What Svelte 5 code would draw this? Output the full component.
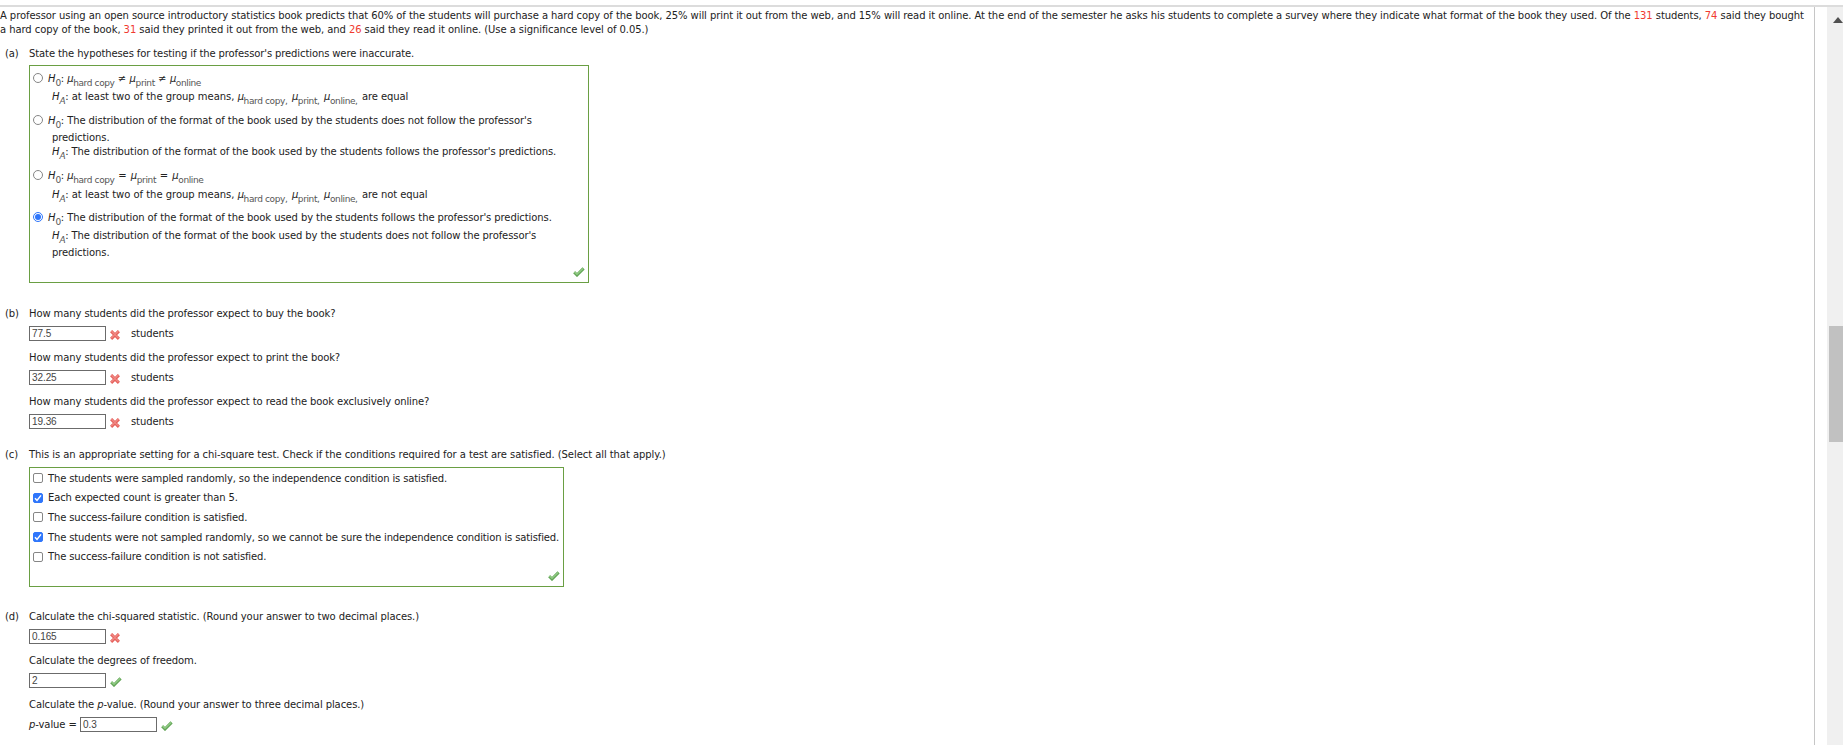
<script lang="ts">
  type Part = { text: string; kind?: 'i' | 'mu' | 'sub' | 'isub' | 'op' | 'eq' | 'sep' | 'lead' };
  type Line = { parts: Part[]; indent?: boolean; gap: number };
  type Hypothesis = { lines: Line[]; checked: boolean; gap: number };

  const h0: Part[] = [{ text: 'H', kind: 'i' }, { text: '0', kind: 'sub' }];
  const hA: Part[] = [{ text: 'H', kind: 'i' }, { text: 'A', kind: 'isub' }];
  const mu = (name: string): Part[] => [{ text: 'μ', kind: 'mu' }, { text: name, kind: 'sub' }];
  const t = (text: string): Part => ({ text });
  const ne: Part = { text: ' ≠ ', kind: 'op' };
  const eq: Part = { text: ' = ', kind: 'eq' };
  const sep: Part = { text: ' ', kind: 'sep' };

  const means = (end: string): Part[] => [
    ...hA,
    { text: ': at least two of the group means, ', kind: 'lead' },
    ...mu('hard copy,'),
    sep,
    ...mu('print,'),
    sep,
    ...mu('online,'),
    sep,
    t(end),
  ];

  const hypotheses: Hypothesis[] = [
    {
      checked: false,
      gap: 6,
      lines: [
        { parts: [...h0, t(': '), ...mu('hard copy'), ne, ...mu('print'), ne, ...mu('online')], gap: 0 },
        { parts: means('are equal'), indent: true, gap: 4 },
      ],
    },
    {
      checked: false,
      gap: 10,
      lines: [
        { parts: [...h0, t(": The distribution of the format of the book used by the students does not follow the professor's")], gap: 0 },
        { parts: [t('predictions.')], indent: true, gap: 3 },
        { parts: [...hA, t(": The distribution of the format of the book used by the students follows the professor's predictions.")], indent: true, gap: 0 },
      ],
    },
    {
      checked: false,
      gap: 10,
      lines: [
        { parts: [...h0, t(': '), ...mu('hard copy'), eq, ...mu('print'), eq, ...mu('online')], gap: 0 },
        { parts: means('are not equal'), indent: true, gap: 5 },
      ],
    },
    {
      checked: true,
      gap: 9,
      lines: [
        { parts: [...h0, t(": The distribution of the format of the book used by the students follows the professor's predictions.")], gap: 0 },
        { parts: [...hA, t(": The distribution of the format of the book used by the students does not follow the professor's")], indent: true, gap: 4 },
        { parts: [t('predictions.')], indent: true, gap: 3 },
      ],
    },
  ];

  const expected = [
    { question: 'How many students did the professor expect to buy the book?', value: '77.5' },
    { question: 'How many students did the professor expect to print the book?', value: '32.25' },
    { question: 'How many students did the professor expect to read the book exclusively online?', value: '19.36' },
  ];

  const conditions = [
    { label: 'The students were sampled randomly, so the independence condition is satisfied.', checked: false },
    { label: 'Each expected count is greater than 5.', checked: true },
    { label: 'The success-failure condition is satisfied.', checked: false },
    { label: 'The students were not sampled randomly, so we cannot be sure the independence condition is satisfied.', checked: true },
    { label: 'The success-failure condition is not satisfied.', checked: false },
  ];
</script>

{#snippet tick()}
  <svg class="mark" width="12" height="10" viewBox="0 0 12 10">
    <path d="M1.2 5.2 L4 8 L10.6 1.4" fill="none" stroke="#62a456" stroke-width="3" />
    <path d="M1.4 4.9 L4 7.3 L10.4 1.2" fill="none" stroke="#8fc983" stroke-width="1.5" />
  </svg>
{/snippet}

{#snippet cross()}
  <svg class="mark" width="10" height="10" viewBox="0 0 10 10">
    <path d="M1.1 1.1 L8.9 8.9 M8.9 1.1 L1.1 8.9" fill="none" stroke="#e6605b" stroke-width="3" />
    <path d="M1.3 1 L8.5 8.2 M8.5 1 L1.3 8.2" fill="none" stroke="#f08a85" stroke-width="1.2" />
  </svg>
{/snippet}

<div class="page">
  <main>
    <div class="intro">
      <div>A professor using an open source introductory statistics book predicts that 60% of the students will purchase a hard copy of the book, 25% will print it out from the web, and 15% will read it online. At the end of the semester he asks his students to complete a survey where they indicate what format of the book they used. Of the <em>131</em> students, <em>74</em> said they bought</div>
      <div>a hard copy of the book, <em>31</em> said they printed it out from the web, and <em>26</em> said they read it online. (Use a significance level of 0.05.)</div>
    </div>

    <section class="a">
      <span class="letter">(a)</span>
      <div class="body">
        <div class="question">State the hypotheses for testing if the professor's predictions were inaccurate.</div>
        <div class="choices hypotheses">
          {#each hypotheses as h, i (i)}
            <div class="choice" style="margin-top: {h.gap}px">
              <span class="radio" class:checked={h.checked}></span>
              <div>
                {#each h.lines as line, j (j)}
                  <div class="line" class:indent={line.indent} style="margin-top: {line.gap}px">{#each line.parts as part, k (k)}<span class={part.kind}>{part.text}</span>{/each}</div>
                {/each}
              </div>
            </div>
          {/each}
          <div class="result">{@render tick()}</div>
        </div>
      </div>
    </section>

    <section class="b">
      <span class="letter">(b)</span>
      <div class="body">
        {#each expected as item, i (i)}
          <div class="question">{item.question}</div>
          <div class="answer">
            <span class="field">{item.value}</span>
            {@render cross()}
            <span class="unit">students</span>
          </div>
        {/each}
      </div>
    </section>

    <section class="c">
      <span class="letter">(c)</span>
      <div class="body">
        <div class="question">This is an appropriate setting for a chi-square test. Check if the conditions required for a test are satisfied. (Select all that apply.)</div>
        <div class="choices conditions">
          {#each conditions as item, i (i)}
            <div class="condition">
              <span class="checkbox" class:checked={item.checked}>
                {#if item.checked}
                  <svg width="10" height="10" viewBox="0 0 10 10"><path d="M2 5.2 L4 7.4 L8 2.4" fill="none" stroke="#fff" stroke-width="1.5" /></svg>
                {/if}
              </span>
              <span>{item.label}</span>
            </div>
          {/each}
          <div class="result">{@render tick()}</div>
        </div>
      </div>
    </section>

    <section class="d">
      <span class="letter">(d)</span>
      <div class="body">
        <div class="question">Calculate the chi-squared statistic. (Round your answer to two decimal places.)</div>
        <div class="answer"><span class="field">0.165</span>{@render cross()}</div>
        <div class="question">Calculate the degrees of freedom.</div>
        <div class="answer"><span class="field">2</span>{@render tick()}</div>
        <div class="question">Calculate the <i>p</i>-value. (Round your answer to three decimal places.)</div>
        <div class="answer"><span class="prefix"><i>p</i>-value =</span><span class="field">0.3</span>{@render tick()}</div>
      </div>
    </section>
  </main>
  <aside>
    <svg width="10" height="6" viewBox="0 0 10 6"><path d="M0 6 L5 0 L10 6 Z" fill="#505050" /></svg>
    <div class="thumb"></div>
  </aside>
</div>

<style>
  :global(body) {
    background: #fff;
    overflow: hidden;
  }
  .page {
    box-sizing: border-box;
    display: flex;
    width: 1843px;
    height: 745px;
    padding-top: 5px;
    overflow: hidden;
    font-family: 'DejaVu Sans', Verdana, sans-serif;
    font-size: 10px;
    line-height: 14px;
    letter-spacing: -0.09px;
    color: #222;
    white-space: nowrap;
    background: linear-gradient(#dcdcdc, #dcdcdc) 0 5px / 100% 2px no-repeat;
  }
  main {
    box-sizing: border-box;
    width: 1815px;
    height: 738px;
    margin-top: 2px;
    padding-top: 2px;
    border-right: 1px solid #c6c6c6;
  }
  .intro {
    letter-spacing: -0.074px;
  }
  em {
    font-style: normal;
    color: #f03a30;
  }
  section {
    display: flex;
  }
  .letter {
    width: 24px;
    padding-left: 5px;
  }
  .a {
    margin-top: 10px;
  }
  .a .question {
    letter-spacing: -0.11px;
  }
  .b {
    margin-top: 24px;
  }
  .b .question {
    letter-spacing: -0.1px;
  }
  .c {
    margin-top: 9px;
  }
  .c .question {
    letter-spacing: -0.065px;
  }
  .d {
    margin-top: 23px;
  }
  .choices {
    box-sizing: border-box;
    display: flex;
    flex-direction: column;
    margin-top: 5px;
    border: 1px solid #6a9f43;
  }
  .hypotheses {
    width: 560px;
    height: 218px;
    margin-top: 4px;
    padding-left: 3px;
  }
  .conditions {
    width: 535px;
    height: 120px;
    padding: 1px 0 0 3px;
    letter-spacing: -0.135px;
  }
  .choice {
    display: flex;
  }
  .radio {
    box-sizing: border-box;
    display: flex;
    align-items: center;
    justify-content: center;
    width: 10px;
    height: 10px;
    margin: 1px 5px 0 0;
    border: 1px solid #868686;
    border-radius: 50%;
  }
  .radio.checked {
    border-color: #2f76fb;
  }
  .radio.checked::after {
    content: '';
    width: 6px;
    height: 6px;
    border-radius: 50%;
    background: #2f76fb;
  }
  .line {
    height: 14px;
    white-space: pre;
  }
  .indent {
    padding-left: 4px;
  }
  .i,
  .mu,
  .isub {
    font-style: italic;
  }
  .mu {
    letter-spacing: -0.4px;
  }
  .lead {
    letter-spacing: -0.02px;
  }
  .op {
    letter-spacing: 0.1px;
  }
  .eq {
    letter-spacing: 0.5px;
  }
  .sep {
    letter-spacing: 1.2px;
  }
  .sub,
  .isub {
    font-size: 9px;
    line-height: 0;
    letter-spacing: -0.38px;
    vertical-align: -4px;
    color: #555;
  }
  .result {
    display: flex;
    justify-content: flex-end;
    margin-top: auto;
    padding: 0 3px 5px 0;
  }
  .condition {
    display: flex;
    align-items: center;
    gap: 5px;
    height: 19.6px;
  }
  .checkbox {
    box-sizing: border-box;
    width: 10px;
    height: 10px;
    margin-top: -1px;
    border: 1px solid #868686;
    border-radius: 2px;
  }
  .checkbox svg {
    display: block;
    margin: -1px;
  }
  .checkbox.checked {
    border-color: #2f76fb;
    background: #2f76fb;
  }
  .answer {
    display: flex;
    align-items: center;
    height: 15px;
    margin: 5px 0 10px;
  }
  .field {
    box-sizing: border-box;
    width: 77px;
    height: 15px;
    margin-right: 4px;
    padding-left: 2px;
    border: 1px solid #6b6b6b;
    font: 10px/13px 'Liberation Sans', Arial, sans-serif;
    color: #444;
  }
  .mark {
    margin-top: 2px;
  }
  .unit {
    margin-left: 11px;
  }
  .prefix {
    width: 51px;
  }
  aside {
    display: flex;
    flex-direction: column;
    box-sizing: border-box;
    align-items: flex-end;
    width: 16px;
    height: 738px;
    margin: 2px 0 0 12px;
    padding-top: 10px;
    background: #f0f0f0;
  }
  .thumb {
    width: 14px;
    height: 116px;
    margin-top: 303px;
    background: #c1c1c1;
  }
</style>
